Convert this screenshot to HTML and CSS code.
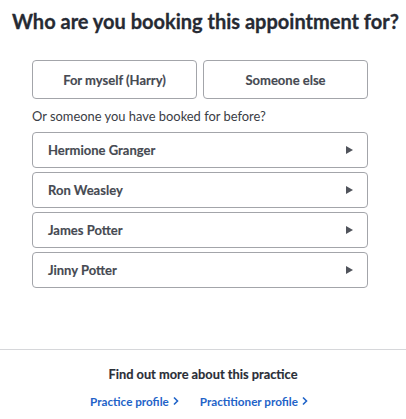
FILE: index.html
```html
<!DOCTYPE html>
<html>
<head>
<meta charset="utf-8">
<link rel="stylesheet" href="styles.css">
</head>
<body>
<div class="page">
  <main class="main">
    <h1 class="title">Who are you booking this appointment for?</h1>
    <div class="choices">
      <button class="choice">For myself (Harry)</button>
      <button class="choice">Someone else</button>
    </div>
    <p class="hint">Or someone you have booked for before?</p>
    <ul class="people">
      <li class="person"><span>Hermione Granger</span><span class="tri"></span></li>
      <li class="person"><span>Ron Weasley</span><span class="tri"></span></li>
      <li class="person"><span>James Potter</span><span class="tri"></span></li>
      <li class="person"><span>Jinny Potter</span><span class="tri"></span></li>
    </ul>
  </main>
  <footer class="footer">
    <div class="footer-title">Find out more about this practice</div>
    <div class="links">
      <a class="link" href="#">Practice profile <svg class="chev" viewBox="0 0 6 10" width="6" height="10"><path d="M1 1.5 L4.5 5 L1 8.5" fill="none" stroke="currentColor" stroke-width="1.6"/></svg></a>
      <a class="link" href="#">Practitioner profile <svg class="chev" viewBox="0 0 6 10" width="6" height="10"><path d="M1 1.5 L4.5 5 L1 8.5" fill="none" stroke="currentColor" stroke-width="1.6"/></svg></a>
    </div>
  </footer>
</div>
</body>
</html>
```

FILE: styles.css
```css
html, body {
  margin: 0;
  padding: 0;
  background: #fff;
}
body {
  font-family: Lato, "Open Sans", sans-serif;
  color: #2b2f38;
}
.page {
  width: 406px;
  height: 419px;
  display: flex;
  flex-direction: column;
}
.main {
  padding: 0 38px 0 32px;
  flex: 1;
}
.title {
  margin: 9px -26px 0 -20px;
  font-size: 20px;
  font-weight: 700;
  line-height: 24px;
  color: #262a33;
  white-space: nowrap;
  -webkit-text-stroke: 0.3px #262a33;
}
.choices {
  display: flex;
  gap: 6px;
  margin-top: 27px;
}
.choice {
  flex: 1;
  height: 39px;
  background: #fff;
  border: 1px solid #a3a5aa;
  border-radius: 4px;
  font-family: inherit;
  font-size: 13px;
  font-weight: 700;
  color: #464a52;
  padding: 0;
  -webkit-text-stroke: 0.15px #464a52;
}
.hint {
  margin: 8px 0 0;
  font-size: 12.9px;
  line-height: 18px;
  color: #3a3d45;
}
.people {
  list-style: none;
  margin: 7px 0 0;
  padding: 0;
  display: flex;
  flex-direction: column;
  gap: 4px;
}
.person {
  height: 34px;
  border: 1px solid #a3a5aa;
  border-radius: 4px;
  display: flex;
  align-items: center;
  justify-content: space-between;
  padding: 0 14px 0 15px;
  font-size: 13px;
  font-weight: 700;
  color: #464a52;
  -webkit-text-stroke: 0.15px #464a52;
}
.tri {
  width: 0;
  height: 0;
  border-top: 4.5px solid transparent;
  border-bottom: 4.5px solid transparent;
  border-left: 7px solid #50535b;
}
.footer {
  border-top: 1px solid #d6d7da;
  height: 69px;
  display: flex;
  flex-direction: column;
  align-items: center;
}
.footer-title {
  margin-top: 15px;
  font-size: 12.8px;
  font-weight: 700;
  line-height: 18px;
  color: #2a2e37;
  -webkit-text-stroke: 0.15px #2a2e37;
}
.links {
  display: flex;
  gap: 21px;
  margin-top: 11px;
  padding-right: 8px;
}
.link {
  font-size: 11.7px;
  font-weight: 700;
  color: #1f63c8;
  text-decoration: none;
  display: flex;
  align-items: center;
  gap: 4px;
}
.chev {
  display: block;
}
```
